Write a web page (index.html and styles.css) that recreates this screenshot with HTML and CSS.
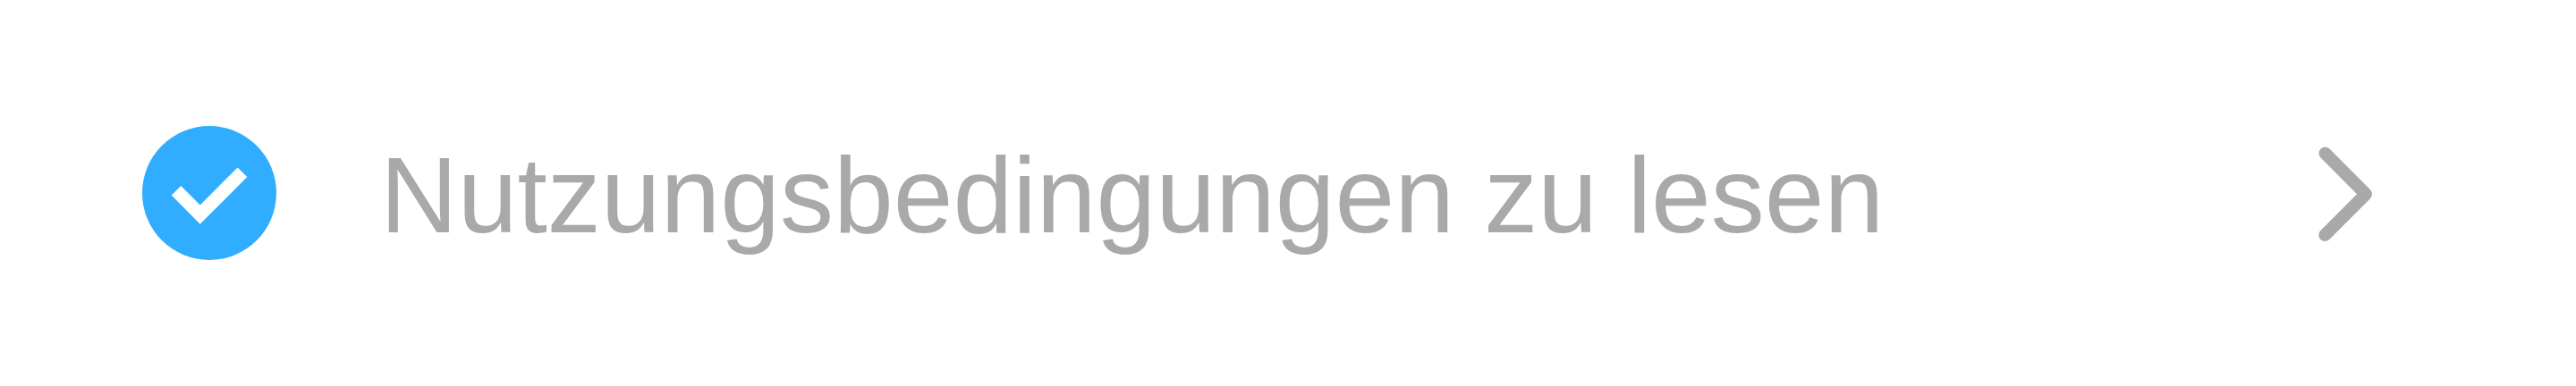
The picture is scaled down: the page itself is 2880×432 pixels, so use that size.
FILE: index.html
```html
<!DOCTYPE html>
<html lang="de">
<head>
<meta charset="utf-8">
<title>Nutzungsbedingungen</title>
<link rel="stylesheet" href="styles.css">
</head>
<body>
<main class="terms">
  <span class="check">
    <input class="check-input" type="checkbox" id="terms" checked>
    <svg class="check-mark" viewBox="0 0 150 150" aria-hidden="true"><path d="M32.7 77.5 43.3 67 64.7 88.4 106.7 46.4 117.3 57 64.7 109.8Z"/></svg>
  </span>
  <label class="terms-label" for="terms">Nutzungsbedingungen zu lesen</label>
  <button class="open" type="button" aria-label="Nutzungsbedingungen lesen">
    <svg class="chevron" viewBox="0 0 60 108" aria-hidden="true"><path d="M7.5 9.5 53 55.3 7.3 101"/></svg>
  </button>
</main>
</body>
</html>
```
FILE: styles.css
```css
body {
  margin: 0;
  background: #fff;
  font-family: "Liberation Sans", Arial, sans-serif;
}

.terms {
  display: flex;
  align-items: center;
  min-height: 100vh;
  box-sizing: border-box;
  padding: 0 228px 0 159px;
}

.check {
  display: grid;
  flex: none;
  width: 150px;
  height: 150px;
}

.check-input,
.check-mark {
  grid-area: 1 / 1;
  width: 100%;
  height: 100%;
  margin: 0;
}

.check-input {
  appearance: none;
  border-radius: 50%;
  background: #a9a9a9;
}

.check-input:checked {
  background: #31adff;
}

.check-mark {
  fill: #fff;
  pointer-events: none;
}

.terms-label {
  flex: 1;
  margin-left: 116px;
  padding-top: 4px;
  color: #a9a9a9;
  font-size: 120px;
  line-height: 160px;
  white-space: nowrap;
}

.open {
  display: flex;
  flex: none;
  padding: 0;
  border: 0;
  background: none;
}

.chevron {
  width: 60px;
  height: 108px;
  fill: none;
  stroke: #a9a9a9;
  stroke-width: 14px;
  stroke-linecap: round;
  stroke-linejoin: round;
}
```
